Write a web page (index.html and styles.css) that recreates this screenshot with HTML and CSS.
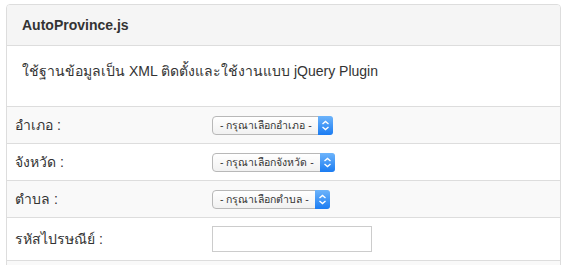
FILE: index.html
```html
<!DOCTYPE html>
<html lang="th">
<head>
  <meta charset="UTF-8" />
  <title>AutoProvince.js</title>
  <link rel="stylesheet" href="styles.css">
</head>
<body>
  <div class="panel">
    <div class="panel-heading">AutoProvince.js</div>
    <div class="panel-body">
      <p>ใช้ฐานข้อมูลเป็น XML ติดตั้งและใช้งานแบบ jQuery Plugin</p>
    </div>
    <table class="table">
      <tr>
        <td class="label">อำเภอ :</td>
        <td>
          <div class="select">
            <span class="select-text">- กรุณาเลือกอำเภอ -</span>
            <span class="select-arrow"><svg width="9" height="11" viewBox="0 0 9 11"><path d="M1.5 4 L4.5 1.5 L7.5 4 M1.5 7 L4.5 9.5 L7.5 7" fill="none" stroke="#fff" stroke-width="1.4"/></svg></span>
          </div>
        </td>
      </tr>
      <tr>
        <td class="label">จังหวัด :</td>
        <td>
          <div class="select">
            <span class="select-text">- กรุณาเลือกจังหวัด -</span>
            <span class="select-arrow"><svg width="9" height="11" viewBox="0 0 9 11"><path d="M1.5 4 L4.5 1.5 L7.5 4 M1.5 7 L4.5 9.5 L7.5 7" fill="none" stroke="#fff" stroke-width="1.4"/></svg></span>
          </div>
        </td>
      </tr>
      <tr>
        <td class="label">ตำบล :</td>
        <td>
          <div class="select">
            <span class="select-text">- กรุณาเลือกตำบล -</span>
            <span class="select-arrow"><svg width="9" height="11" viewBox="0 0 9 11"><path d="M1.5 4 L4.5 1.5 L7.5 4 M1.5 7 L4.5 9.5 L7.5 7" fill="none" stroke="#fff" stroke-width="1.4"/></svg></span>
          </div>
        </td>
      </tr>
      <tr>
        <td class="label">รหัสไปรษณีย์ :</td>
        <td><input class="zipcode" type="text" /></td>
      </tr>
      <tr>
        <td class="label"></td>
        <td></td>
      </tr>
    </table>
  </div>
</body>
</html>
```

FILE: styles.css
```css
body { margin: 0; font-family: "Liberation Sans", Arial, sans-serif; font-size: 14px; line-height: 20px; color: #333; background: #fff; }
.panel { margin: 4px 0 0 6px; width: 553px; border: 1px solid #ddd; border-radius: 4px; overflow: hidden; }
.panel-heading { background: #f5f5f5; border-bottom: 1px solid #ddd; padding: 10px 15px; height: 20px; font-weight: bold; font-size: 14px; }
.panel-body { padding: 15px; }
.panel-body p { margin: 0 0 10px; height: 20px; }
.table { width: 100%; border-collapse: collapse; }
.table td { padding: 8px; height: 20px; border-top: 1px solid #ddd; vertical-align: middle; }
.table tr:nth-child(odd) td { background: #f9f9f9; }
.table td.label { width: 181px; }
.select { display: flex; width: fit-content; height: 17px; border: 1px solid #b8b8b8; border-radius: 4px; background: linear-gradient(#fff, #f1f1f1); font-size: 10.5px; line-height: 17px; }
.select-text { padding: 0 6px 0 7px; }
.select-arrow { width: 15px; display: flex; align-items: center; justify-content: center; background: linear-gradient(#6db4fb, #1b7cf2); border-radius: 0 3px 3px 0; margin: -1px -1px -1px 0; }
.zipcode { display: block; width: 160px; height: 26px; box-sizing: border-box; border: 1px solid #ccc; margin: 0; padding: 2px 4px; background: #fff; }
```
